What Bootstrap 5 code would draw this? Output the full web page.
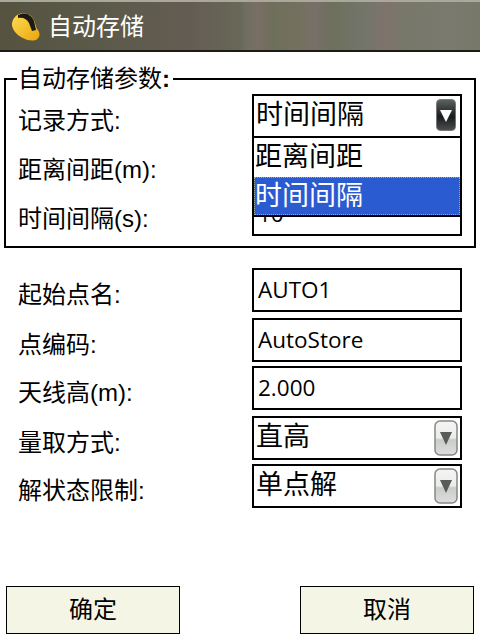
<!DOCTYPE html>
<html lang="zh-CN">
<head>
  <meta charset="UTF-8" />
  <meta name="viewport" content="width=device-width, initial-scale=1.0"/>
  <title>自动存储</title>
  <link href="https://cdn.jsdelivr.net/npm/bootstrap@5.3.0/dist/css/bootstrap.min.css" rel="stylesheet"/>
  <style>
    body {
      width: 480px;
      height: 640px;
      overflow: hidden;
      background: #fff;
      color: #000;
      font-family: "Liberation Sans", "Noto Sans CJK SC", sans-serif;
    }
    .title-bar {
      height: 52px;
      padding: 4px 0 0 11px;
      gap: 7px;
      color: #fff;
      font-size: 24px;
      border-bottom: 2px solid #1c1c14;
      background: linear-gradient(90deg, #55523f 0, #5b5a4a 100px, #645c53 190px, #686858 240px, #6e6e60 245px, #7a6e66 258px, #6e6f5a 272px, #74705f 300px, #77706a 315px, #6e6f5c 330px, #72756a 365px, #7f736c 385px, #77786a 405px, #7a7b6e 450px, #77786a 480px);
      box-shadow: inset 0 2px 0 #a9a89a;
    }
    .param-box {
      position: relative;
      margin: 26px 4px 0 4px;
      height: 170px;
      border: 2px solid #000;
      padding: 14px 12px 0 12px;
    }
    .param-title {
      position: absolute;
      left: 11px;
      top: -15px;
      padding: 0 3px 0 1px;
      background: #fff;
      font-size: 24px;
      line-height: 28px;
    }
    .param-title b { font-weight: 700; }
    .field-row {
      display: flex;
      align-items: center;
      font-size: 24px;
    }
    .field-label { width: 234px; padding-top: 10px; }
    .field-label.low { padding-top: 14px; }
    .field-box {
      width: 210px;
      height: 100%;
      border: 2px solid #000;
      padding: 0 4px;
      display: flex;
      align-items: center;
      font-size: 22.5px;
      background: #fff;
      font-family: "Open Sans", "Noto Sans CJK SC", sans-serif;
    }
    .field-box.combo {
      justify-content: space-between;
      padding: 0 2px;
      font-size: 27px;
      font-family: "Noto Sans CJK SC", sans-serif;
    }
    .combo-text { padding-bottom: 6px; }
    .combo-arrow { flex: none; display: block; }
    .arrow-dark { margin: 0 2px 2px 0; }
    .h-rec { height: 44px; }
    .h-a { height: 49px; }
    .value-peek { padding-top: 4px; }
    .drop-menu {
      position: absolute;
      left: 246px;
      top: 56px;
      width: 210px;
      height: 81px;
      border: 2px solid #000;
      background: #fff;
      font-size: 27px;
      line-height: 33px;
      font-family: "Noto Sans CJK SC", sans-serif;
      z-index: 5;
    }
    .drop-item { height: 39px; padding-left: 1px; }
    .drop-item.picked {
      height: 38px;
      background: #2a5bd0;
      color: #fff;
      outline: 1px dotted #9aa;
      outline-offset: -1px;
    }
    .lower-form { margin: 20px 18px 0 18px; display: flex; flex-direction: column; }
    .h-c1 { height: 44px; margin-bottom: 6px; }
    .h-c2 { height: 44px; margin-bottom: 4px; }
    .h-c3 { height: 44px; margin-bottom: 6px; }
    .h-c4 { height: 44px; margin-bottom: 4px; }
    .h-c5 { height: 44px; }
    .foot-row {
      margin: 78px 6px 0 6px;
      display: flex;
      justify-content: space-between;
    }
    .foot-btn {
      width: 174px;
      height: 48px;
      padding: 0 0 5px 0;
      border: 1px solid #000;
      border-radius: 0;
      background: #f5f5e6;
      color: #000;
      font-size: 24px;
      font-family: "Noto Sans CJK SC", sans-serif;
    }
  </style>
</head>
<body class="m-0">

  <div class="title-bar d-flex align-items-center">
    <!-- helmet -->
    <svg width="30" height="30" viewBox="0 0 30 30">
      <defs>
        <linearGradient id="hat" x1="0" y1="0" x2="1" y2="1">
          <stop offset="0" stop-color="#ffdd55"/>
          <stop offset="1" stop-color="#eaa50c"/>
        </linearGradient>
      </defs>
      <path d="M2 8 C5 1 14 -1 20 4 C24 8 24 12 26 17 C29 20 30 25 25 28 C18 30 9 26 4 20 C1 16 0 12 2 8 Z" fill="url(#hat)"/>
      <path d="M7 3 C14 -1 21 3 23 9 L25 18 L21 19 L18 11 C16 7 12 5 7 6 Z" fill="#1c1a14"/>
    </svg>
    <span>自动存储</span>
  </div>

  <div class="param-box">
    <div class="param-title">自动存储参数<b>:</b></div>

    <div class="field-row h-rec">
      <span class="field-label">记录方式:</span>
      <div class="field-box combo">
        <span class="combo-text">时间间隔</span>
        <svg class="combo-arrow arrow-dark" width="20" height="32" viewBox="0 0 20 32">
          <defs>
            <linearGradient id="darkBtn" x1="0" y1="0" x2="0" y2="1">
              <stop offset="0" stop-color="#5c6462"/>
              <stop offset="0.55" stop-color="#1a1d1d"/>
              <stop offset="1" stop-color="#4a4f4f"/>
            </linearGradient>
          </defs>
          <rect x="0.5" y="0.5" width="19" height="31" rx="4" fill="url(#darkBtn)" stroke="#777"/>
          <path d="M4 11 H16 L10 23 Z" fill="#fff"/>
        </svg>
      </div>
    </div>

    <div class="field-row h-a">
      <span class="field-label low">距离间距(m):</span>
      <div class="field-box">20</div>
    </div>

    <div class="field-row h-a">
      <span class="field-label low">时间间隔(s):</span>
      <div class="field-box value-peek">10</div>
    </div>

    <div class="drop-menu">
      <div class="drop-item">距离间距</div>
      <div class="drop-item picked">时间间隔</div>
    </div>
  </div>

  <div class="lower-form">
    <div class="field-row h-c1">
      <span class="field-label">起始点名:</span>
      <div class="field-box">AUTO1</div>
    </div>
    <div class="field-row h-c2">
      <span class="field-label">点编码:</span>
      <div class="field-box">AutoStore</div>
    </div>
    <div class="field-row h-c3">
      <span class="field-label">天线高(m):</span>
      <div class="field-box">2.000</div>
    </div>
    <div class="field-row h-c4">
      <span class="field-label">量取方式:</span>
      <div class="field-box combo">
        <span class="combo-text">直高</span>
        <svg class="combo-arrow" width="24" height="36" viewBox="0 0 24 36">
          <defs>
            <linearGradient id="greyBtn" x1="0" y1="0" x2="0" y2="1">
              <stop offset="0" stop-color="#f4f4f2"/>
              <stop offset="0.5" stop-color="#ececea"/>
              <stop offset="0.55" stop-color="#c9cdc9"/>
              <stop offset="1" stop-color="#dcdedb"/>
            </linearGradient>
          </defs>
          <rect x="1" y="1" width="22" height="34" rx="5" fill="url(#greyBtn)" stroke="#868886" stroke-width="1.5"/>
          <path d="M6 12 H18 L12 25 Z" fill="#5a5a5a"/>
        </svg>
      </div>
    </div>
    <div class="field-row h-c5">
      <span class="field-label">解状态限制:</span>
      <div class="field-box combo">
        <span class="combo-text">单点解</span>
        <svg class="combo-arrow" width="24" height="36" viewBox="0 0 24 36">
          <rect x="1" y="1" width="22" height="34" rx="5" fill="url(#greyBtn)" stroke="#868886" stroke-width="1.5"/>
          <path d="M6 12 H18 L12 25 Z" fill="#5a5a5a"/>
        </svg>
      </div>
    </div>
  </div>

  <div class="foot-row">
    <button type="button" class="btn foot-btn">确定</button>
    <button type="button" class="btn foot-btn">取消</button>
  </div>

</body>
</html>
